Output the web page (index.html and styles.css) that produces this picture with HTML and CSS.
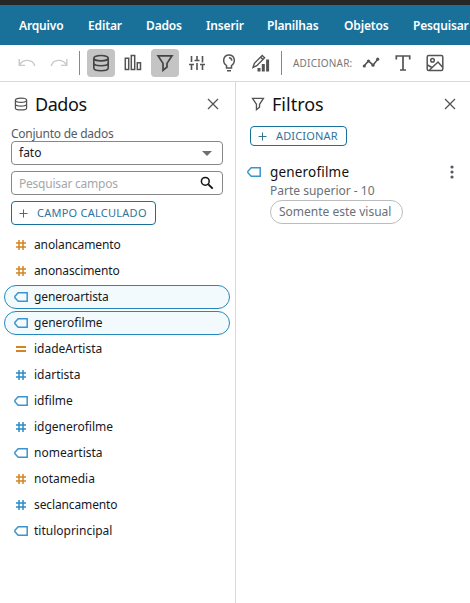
FILE: index.html
```html
<!DOCTYPE html>
<html lang="pt">
<head>
<meta charset="utf-8">
<title>Dados e filtros</title>
<link rel="stylesheet" href="styles.css">
</head>
<body>
<svg class="defs" width="0" height="0">
  <symbol id="hash" viewBox="0 0 12 12"><path d="M4 1v10M8 1v10M1 4h10M1 8h10" fill="none" stroke="currentColor" stroke-width="1.5"/></symbol>
  <symbol id="equal" viewBox="0 0 12 12"><path d="M1 4h10M1 8h10" fill="none" stroke="currentColor" stroke-width="1.8"/></symbol>
  <symbol id="tag" viewBox="0 0 14 10"><path d="M4.2 .8H13.2V9.2H4.2L.9 5.8V4.2z" fill="none" stroke="currentColor" stroke-width="1.5"/></symbol>
  <symbol id="db" viewBox="0 0 18 18"><g fill="none" stroke="currentColor" stroke-width="1.6"><ellipse cx="9" cy="4.200" rx="7.200" ry="2.700"/><path d="M1.800 4.200v9.800c0 3.600 14.400 3.600 14.400 0V4.200M1.800 9c0 3.600 14.400 3.600 14.400 0"/></g></symbol>
  <symbol id="funnel" viewBox="0 0 18 18"><path d="M2 1.8h14l-5 7.6V13l-4 3.3V9.4z" fill="none" stroke="currentColor" stroke-width="1.7"/></symbol>
  <symbol id="close" viewBox="0 0 12 12"><path d="M1 1l10 10M11 1L1 11" fill="none" stroke="currentColor" stroke-width="1.3"/></symbol>
  <symbol id="plus" viewBox="0 0 9 9"><path d="M4.500 .5v8M.5 4.500h8" fill="none" stroke="currentColor" stroke-width="1"/></symbol>
</svg>
<div class="topstrip"></div>
<nav class="menu">
  <span class="m1">Arquivo</span><span class="m2">Editar</span><span class="m3">Dados</span><span class="m4">Inserir</span><span class="m5">Planilhas</span><span class="m6">Objetos</span><span class="m7">Pesquisar</span>
</nav>
<div class="toolbar">
  <span class="tool off"><svg width="18" height="18" viewBox="0 0 18 18"><path d="M1.200 5v6.400H7M1.500 11C5 4.800 14.500 4.500 16.800 12" fill="none" stroke="currentColor" stroke-width="1.400"/></svg></span>
  <span class="tool off"><svg width="18" height="18" viewBox="0 0 18 18"><path d="M16.800 5v6.400H11M16.500 11C13 4.800 3.500 4.500 1.200 12" fill="none" stroke="currentColor" stroke-width="1.400"/></svg></span>
  <span class="divider d1"></span>
  <span class="tool on"><svg width="18" height="18"><use href="#db"/></svg></span>
  <span class="tool"><svg width="18" height="18" viewBox="0 0 18 18"><path d="M1.300 4.300h3.400v11.200H1.300zM7.300 1.500h3.400v14H7.300zM13.300 8.800h3.200v6.700h-3.200z" fill="none" stroke="currentColor" stroke-width="1.500"/></svg></span>
  <span class="tool on"><svg width="18" height="18"><use href="#funnel"/></svg></span>
  <span class="tool"><svg width="18" height="18" viewBox="0 0 18 18"><path d="M3.500 2v6M3.500 10v6M9 2v4M9 9v7M14.500 2v6.500M14.500 11v5M1 10.500h5M6.500 6.500h5M12 10.500h5" fill="none" stroke="currentColor" stroke-width="1.600"/></svg></span>
  <span class="tool"><svg width="18" height="18" viewBox="0 0 18 18"><path d="M6.500 14v-2.500C2 8.500 3 1 9 1s7 7.500 2.500 10.500V14zM7 16.800h4M9 3.800c1.700.1 2.700 1.100 2.800 2.800" fill="none" stroke="currentColor" stroke-width="1.500"/></svg></span>
  <span class="tool"><svg width="18" height="18" viewBox="0 0 18 18"><path d="M1 13.500l1.400-4.200 7.800-7.900 2.400 2.400-7.800 7.900zM8.600 3.100L11 5.500" fill="none" stroke="currentColor" stroke-width="1.400"/><path d="M5.500 14h3v3.500h-3zM9.800 10h3v7.500h-3zM14.100 5.500h3v12h-3z" fill="currentColor"/></svg></span>
  <span class="divider d2"></span>
  <span class="add-label">ADICIONAR:</span>
  <span class="tool"><svg width="18" height="18" viewBox="0 0 18 18"><path d="M2 12l4.500-5 4.500 4.200L16 5" fill="none" stroke="currentColor" stroke-width="1.600"/><g fill="currentColor"><circle cx="2.300" cy="12" r="1.600"/><circle cx="6.500" cy="7" r="1.600"/><circle cx="11" cy="11.200" r="1.600"/><circle cx="15.700" cy="5.200" r="1.600"/></g></svg></span>
  <span class="tool"><svg width="18" height="18" viewBox="0 0 18 18"><path d="M2.300 5.500V2h13.400v3.500M9 2v14M6 16h6" fill="none" stroke="currentColor" stroke-width="1.700"/></svg></span>
  <span class="tool"><svg width="18" height="18" viewBox="0 0 18 18"><g fill="none" stroke="currentColor" stroke-width="1.500"><rect x="1.200" y="1.500" width="15.600" height="15" rx="1.500"/><circle cx="6.500" cy="6.200" r="1.800"/><path d="M3.500 16L12 8l4.800 5.500M1.500 11l4.500 2.500"/></g></svg></span>
</div>
<main class="panels">
  <section class="panel data">
    <header><svg class="hi" width="14" height="14"><use href="#db"/></svg><h2 class="h-data">Dados</h2><svg class="x" width="12" height="12"><use href="#close"/></svg></header>
    <div class="label"><span>Conjunto de dados</span></div>
    <div class="box select"><span>fato</span><svg width="10" height="5" viewBox="0 0 10 5"><path d="M0 0h10L5 5z" fill="#687078"/></svg></div>
    <div class="box search"><span>Pesquisar campos</span><svg width="14" height="14" viewBox="0 0 14 14"><circle cx="5.300" cy="5.300" r="3.900" fill="none" stroke="#111" stroke-width="1.500"/><path d="M8.300 8.300l4.400 4.400" stroke="#111" stroke-width="1.900"/></svg></div>
    <div class="btn calc"><svg width="9" height="9"><use href="#plus"/></svg><span>CAMPO CALCULADO</span></div>
    <ul>
      <li class="orange"><svg class="fi"><use href="#hash"/></svg><span class="f1">anolancamento</span></li>
      <li class="orange"><svg class="fi"><use href="#hash"/></svg><span class="f2">anonascimento</span></li>
      <li class="sel"><svg class="ft"><use href="#tag"/></svg><span class="f3">generoartista</span></li>
      <li class="sel"><svg class="ft"><use href="#tag"/></svg><span class="f4">generofilme</span></li>
      <li class="orange"><svg class="fi"><use href="#equal"/></svg><span class="f5">idadeArtista</span></li>
      <li><svg class="fi"><use href="#hash"/></svg><span class="f6">idartista</span></li>
      <li><svg class="ft"><use href="#tag"/></svg><span class="f7">idfilme</span></li>
      <li><svg class="fi"><use href="#hash"/></svg><span class="f8">idgenerofilme</span></li>
      <li><svg class="ft"><use href="#tag"/></svg><span class="f9">nomeartista</span></li>
      <li class="orange"><svg class="fi"><use href="#hash"/></svg><span class="f10">notamedia</span></li>
      <li><svg class="fi"><use href="#hash"/></svg><span class="f11">seclancamento</span></li>
      <li><svg class="ft"><use href="#tag"/></svg><span class="f12">tituloprincipal</span></li>
    </ul>
  </section>
  <section class="panel filters">
    <header><svg class="hi" width="14" height="14"><use href="#funnel"/></svg><h2 class="h-filters">Filtros</h2><svg class="x" width="12" height="12"><use href="#close"/></svg></header>
    <div class="btn add"><svg width="9" height="9"><use href="#plus"/></svg><span>ADICIONAR</span></div>
    <div class="filter">
      <svg class="ft"><use href="#tag"/></svg>
      <div class="info">
        <div class="name"><span>generofilme</span></div>
        <div class="cond"><span>Parte superior - 10</span></div>
        <div class="chip"><span>Somente este visual</span></div>
      </div>
      <svg class="dots" width="4" height="14" viewBox="0 0 4 14"><g fill="#545b64"><circle cx="2" cy="2" r="1.600"/><circle cx="2" cy="7" r="1.600"/><circle cx="2" cy="12" r="1.600"/></g></svg>
    </div>
  </section>
</main>
</body>
</html>
```

FILE: styles.css
```css
* { box-sizing: border-box; }
body { margin: 0; width: 470px; height: 603px; overflow: hidden; background: #fff; color: #16191f; font: 12px/16px "Noto Sans", "Open Sans", sans-serif; display: flex; flex-direction: column; white-space: nowrap; }
svg { display: block; flex: none; }
.defs { position: absolute; }
.topstrip { height: 5px; background: #262626; flex: none; }
.menu { height: 40px; flex: none; background: #19719a; color: #fff; display: flex; align-items: center; padding: 2px 0 0 19px; font-size: 12px; font-weight: 600; letter-spacing: -.15px; }
.menu span { flex: none; }
.m1 { width: 69px; } .m2 { width: 58px; } .m3 { width: 60px; } .m4 { width: 61px; } .m5 { width: 77px; } .m6 { width: 69px; }
.toolbar { height: 37px; flex: none; border-bottom: 1px solid #d9d9d9; display: flex; align-items: center; padding-left: 13px; gap: 4px; color: #545454; }
.tool { width: 28px; height: 28px; border-radius: 4px; display: flex; align-items: center; justify-content: center; flex: none; }
.on { background: #c4c4c4; color: #444; }
.off { color: #c9c9c9; }
.divider { width: 1px; height: 24px; background: #888; flex: none; }
.d1 { margin: 0 3px 0 2px; }
.d2 { margin: 0 7px 0 2px; }
.add-label { width: 60px; font-size: 10px; color: #777; letter-spacing: .2px; }
.panels { display: flex; flex: 1; }
.panel { display: flex; flex-direction: column; align-items: flex-start; }
.data { width: 236px; border-right: 1px solid #d9d9d9; }
.filters { flex: 1; }
header { display: flex; align-items: center; width: 100%; height: 44px; padding-right: 16px; color: #545454; }
.data header { padding-left: 14px; }
.filters header { padding: 0 14px 0 15px; }
h2 { margin: 0 auto 0 7px; font-size: 18px; line-height: 24px; font-weight: 400; color: #111; }
.h-data { letter-spacing: -.45px; }
.label { margin-left: 11px; height: 15px; line-height: 15px; color: #545b64; letter-spacing: -.25px; }
.box { width: 212px; height: 24px; margin-left: 11px; border: 1px solid #878787; border-radius: 4px; display: flex; align-items: center; justify-content: space-between; padding: 0 8px 0 7px; }
.select { padding-right: 10px; }
.search { margin-top: 6px; color: #a4a8ac; letter-spacing: -.22px; }
.search span { margin-top: 1px; }
.btn { display: flex; align-items: center; border: 1px solid #19719a; border-radius: 4px; color: #31739a; }
.calc { width: 145px; height: 24px; margin: 6px 0 0 11px; padding-left: 7px; gap: 9px; font-size: 11px; letter-spacing: .25px; }
.add { width: 97px; height: 20px; margin-left: 14px; padding-left: 7px; gap: 9px; font-size: 11px; letter-spacing: .15px; }
ul { list-style: none; margin: 8px 0 0 4px; padding: 0; display: flex; flex-direction: column; gap: 2px; }
li { width: 226px; height: 24px; padding-left: 10px; border-radius: 12px; display: flex; align-items: center; color: #2e8bc5; }
li span { color: #16191f; }
.f1, .f2, .f11, .f3 { letter-spacing: -.12px; }
li.orange { color: #d28522; }
li.sel { border: 1px solid #2488bd; background: #f2fafe; padding-left: 9px; }
.fi { width: 12px; height: 12px; margin: 0 7px 0 1px; }
.ft { width: 14px; height: 10px; margin-right: 6px; color: #3b94cc; }
.filter { display: flex; width: 100%; padding: 18px 16px 0 11px; }
.filter > .ft { margin: 3px 9px 0 0; }
.info { flex: 1; }
.name { font-size: 13.5px; height: 18px; color: #111; letter-spacing: .18px; }
.cond { height: 18px; color: #687078; line-height: 18px; }
.chip { width: 133px; height: 24px; border: 1px solid #bcbcbc; border-radius: 12px; padding-left: 8px; line-height: 22px; color: #687078; }
.dots { margin-top: 1px; }
```
